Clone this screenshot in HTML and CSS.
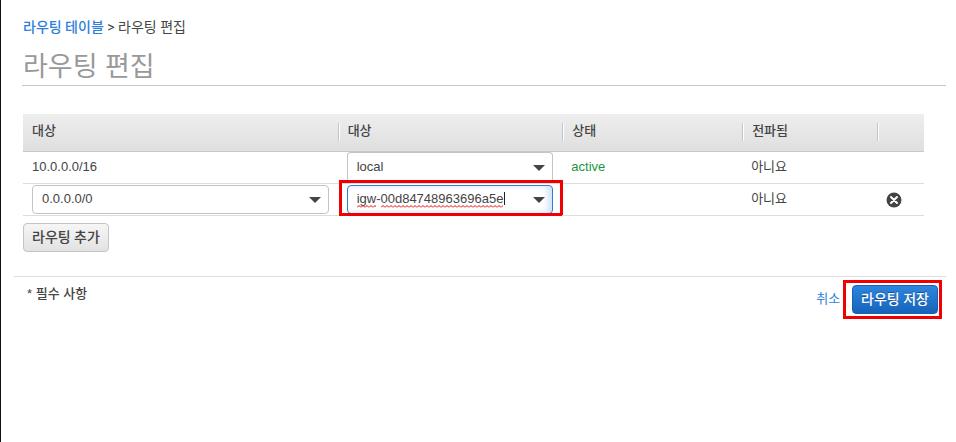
FILE: index.html
```html
<!DOCTYPE html>
<html lang="ko">
<head>
<meta charset="utf-8">
<title>라우팅 편집</title>
<link rel="stylesheet" href="styles.css">
</head>
<body>
<main class="page">
  <header class="head">
    <nav class="crumbs"><a class="crumb-link" href="#">라우팅 테이블</a> &gt; 라우팅 편집</nav>
    <h1 class="title">라우팅 편집</h1>
  </header>
  <section class="routes">
    <table class="table">
      <colgroup><col class="c-dest"><col class="c-target"><col class="c-status"><col class="c-prop"><col class="c-remove"></colgroup>
      <thead>
        <tr>
          <th><div class="th">대상</div></th>
          <th><div class="th">대상</div></th>
          <th><div class="th">상태</div></th>
          <th><div class="th">전파됨</div></th>
          <th><div class="th"></div></th>
        </tr>
      </thead>
      <tbody>
        <tr>
          <td>10.0.0.0/16</td>
          <td>
            <div class="combo combo-open">
              <input class="combo-input" type="text" value="local" aria-label="대상">
              <button class="combo-arrow" type="button" aria-label="열기"><svg width="12" height="6" viewBox="0 0 12 6"><path d="M0 0h12L6 6z"/></svg></button>
            </div>
          </td>
          <td class="active">active</td>
          <td>아니요</td>
          <td></td>
        </tr>
        <tr>
          <td>
            <div class="combo">
              <input class="combo-input" type="text" value="0.0.0.0/0" aria-label="대상">
              <button class="combo-arrow" type="button" aria-label="열기"><svg width="12" height="6" viewBox="0 0 12 6"><path d="M0 0h12L6 6z"/></svg></button>
            </div>
          </td>
          <td>
            <div class="combo combo-focus">
              <input class="combo-input" type="text" value="igw-00d84748963696a5e" aria-label="대상" spellcheck="false">
              <button class="combo-arrow" type="button" aria-label="열기"><svg width="12" height="6" viewBox="0 0 12 6"><path d="M0 0h12L6 6z"/></svg></button>
              <svg class="squiggle" width="150" height="18" viewBox="0 0 150 18">
                <defs><pattern id="wave" width="4" height="3" y="14" patternUnits="userSpaceOnUse"><path d="M0 2.5 2 .5 4 2.5" fill="none" stroke="#e00" stroke-width="1"/></pattern></defs>
                <path d="M0 14h19v3H0zM24 14h122v3H24z" fill="url(#wave)"/>
                <path d="M147 1h1v13h-1z" fill="#222"/>
              </svg>
            </div>
            <span class="mark mark-target"></span>
          </td>
          <td></td>
          <td>아니요</td>
          <td class="remove-cell">
            <button class="remove" type="button" aria-label="삭제"><svg width="16" height="16" viewBox="0 0 16 16"><circle cx="8" cy="8" r="7.5" fill="#444"/><path d="M5 5l6 6M11 5l-6 6" stroke="#fff" stroke-width="2" stroke-linecap="round"/></svg></button>
          </td>
        </tr>
      </tbody>
    </table>
    <button class="btn" type="button">라우팅 추가</button>
  </section>
  <footer class="foot">
    <span class="required">* 필수 사항</span>
    <div class="actions">
      <a class="cancel" href="#">취소</a>
      <div class="save-wrap"><button class="btn btn-primary" type="button">라우팅 저장</button><span class="mark mark-save"></span></div>
    </div>
  </footer>
</main>
</body>
</html>
```
FILE: styles.css
```css
* { box-sizing: border-box; }
body {
  margin: 0;
  background: #fff;
  color: #444;
  font: 13px/18px "Liberation Sans", "Noto Sans CJK KR", sans-serif;
}
button, input { font: inherit; color: inherit; }
button { cursor: pointer; }
a { text-decoration: none; color: #2e7fdb; }

.page {
  min-height: 100vh;
  border-left: 1px solid #111;
  padding: 18px 10px 0 13px;
}
.head {
  margin-left: 8px;
  border-bottom: 1px solid #c8c8c8;
}
.crumbs {
  padding-left: 1px;
  font-family: Roboto, "Noto Sans CJK KR", sans-serif;
  font-size: 14px;
}
.crumb-link { font-weight: 500; }
.title {
  margin: 14px 0 0;
  padding-left: 1px;
  font-size: 27px;
  line-height: 35px;
  font-weight: 400;
  color: #999;
}

.routes { margin: 28px 22px 0 9px; }
.table {
  width: 100%;
  table-layout: fixed;
  border-collapse: separate;
  border-spacing: 0;
}
.c-dest { width: 35%; }
.c-target { width: 25%; }
.c-status { width: 20%; }
.c-prop { width: 15%; }
.c-remove { width: 47px; }

th {
  height: 38px;
  padding: 0 0 1px;
  text-align: left;
  font-weight: 500;
  background: linear-gradient(#eee, #dfdfdf);
  border-bottom: 1px solid #c8c8c8;
}
.th {
  height: 18px;
  padding-left: 9px;
  line-height: 16px;
}
th + th .th {
  border-left: 1px solid #c4c4c4;
  box-shadow: inset 1px 0 #fff;
}
td {
  position: relative;
  height: 32px;
  padding: 0 9px 2px;
  border-bottom: 1px solid #ddd;
  line-height: 18px;
}
td:has(.combo), .remove-cell { padding-bottom: 0; }
.active { color: #1a9641; }

.combo {
  position: relative;
  display: flex;
  align-items: center;
  height: 29px;
  border: 1px solid #c4c4c4;
  border-radius: 4px;
  background: #fff;
}
.combo-open {
  height: 31px;
  border-bottom: 0;
  border-radius: 4px 4px 0 0;
}
.combo-focus {
  border-color: #2e7fdb;
  box-shadow: inset -4px 0 6px #cfe2f8;
}
.combo-input {
  flex: 1;
  min-width: 0;
  padding: 0 0 2px 9px;
  border: 0;
  outline: 0;
  background: none;
}
.combo-arrow {
  display: flex;
  padding: 0 7px;
  border: 0;
  background: none;
}
.combo-arrow svg { fill: #444; }
.squiggle {
  position: absolute;
  left: 9px;
  top: 5px;
}

.remove {
  display: flex;
  padding: 0;
  border: 0;
  background: none;
}

.btn {
  height: 29px;
  margin-top: 7px;
  padding: 0 8px 2px;
  border: 1px solid #c4c4c4;
  border-radius: 4px;
  font-family: Roboto, "Noto Sans CJK KR", sans-serif;
  font-size: 14px;
  font-weight: 500;
  background: linear-gradient(#f6f6f6, #e2e2e2);
}

.foot {
  display: flex;
  justify-content: space-between;
  align-items: flex-start;
  margin-top: 24px;
  padding: 8px 8px 0 13px;
  border-top: 1px solid #ddd;
}
.required { font-weight: 500; }
.actions {
  display: flex;
  align-items: center;
  gap: 12px;
}
.cancel { padding-bottom: 2px; }
.save-wrap {
  position: relative;
  display: flex;
}
.btn-primary {
  margin: 0;
  color: #fff;
  border-color: #1a5fb0;
  background: linear-gradient(#2e86de, #1664ba);
  text-shadow: 0 -1px #1a5299;
}

.mark {
  position: absolute;
  border: 3px solid #f00000;
  pointer-events: none;
}
.mark-target { inset: -4px -1px -1px 1px; }
.mark-save { inset: -5px -4px -5px -9px; }
```
